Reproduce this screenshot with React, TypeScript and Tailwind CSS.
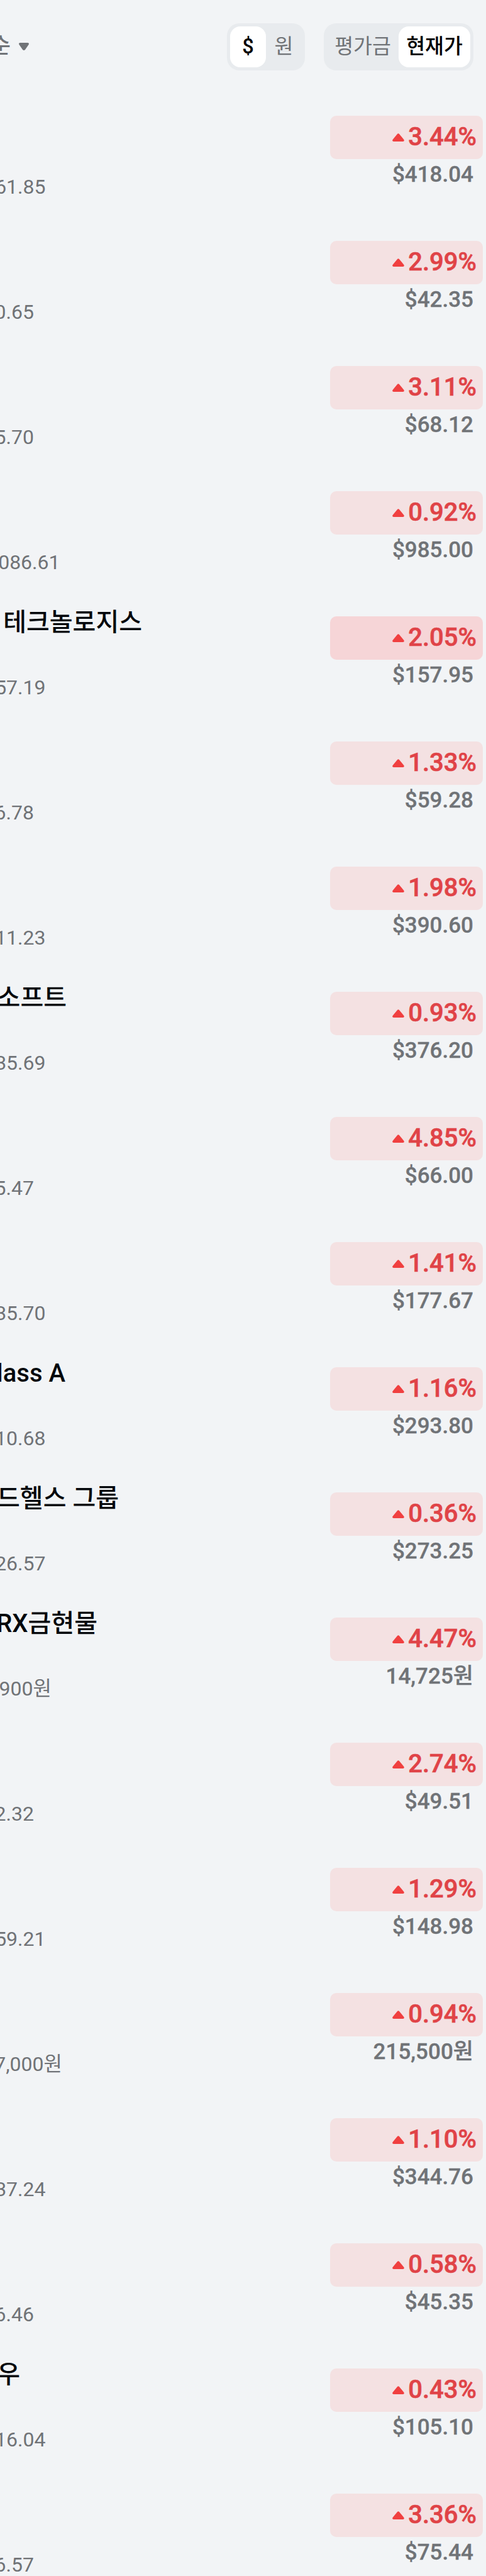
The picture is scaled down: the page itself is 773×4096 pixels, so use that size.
import React from "react";

type Holding = { name?: string; nameW?: string; sub: string; subW: string; rate: string; price: string; hot?: boolean };

const holdings: Holding[] = [
  { sub: "61.85", subW: "w-[72.5px]", rate: "3.44%", price: "$418.04" },
  { sub: "0.65", subW: "w-[54px]", rate: "2.99%", price: "$42.35" },
  { sub: "5.70", subW: "w-[54px]", rate: "3.11%", price: "$68.12" },
  { sub: "086.61", subW: "w-[95.5px]", rate: "0.92%", price: "$985.00" },
  { name: "테크놀로지스", nameW: "w-[226px]", sub: "57.19", subW: "w-[72.5px]", rate: "2.05%", price: "$157.95", hot: true },
  { sub: "6.78", subW: "w-[54px]", rate: "1.33%", price: "$59.28" },
  { sub: "11.23", subW: "w-[72.5px]", rate: "1.98%", price: "$390.60" },
  { name: "소프트", nameW: "w-[106px]", sub: "35.69", subW: "w-[72.5px]", rate: "0.93%", price: "$376.20" },
  { sub: "5.47", subW: "w-[54px]", rate: "4.85%", price: "$66.00" },
  { sub: "35.70", subW: "w-[72.5px]", rate: "1.41%", price: "$177.67" },
  { name: "lass A", nameW: "w-[104px]", sub: "10.68", subW: "w-[72.5px]", rate: "1.16%", price: "$293.80" },
  { name: "드헬스 그룹", nameW: "w-[189px]", sub: "26.57", subW: "w-[72.5px]", rate: "0.36%", price: "$273.25" },
  { name: "RX금현물", nameW: "w-[155px]", sub: "900원", subW: "w-[82px]", rate: "4.47%", price: "14,725원" },
  { sub: "2.32", subW: "w-[54px]", rate: "2.74%", price: "$49.51" },
  { sub: "59.21", subW: "w-[72.5px]", rate: "1.29%", price: "$148.98" },
  { sub: "7,000원", subW: "w-[99px]", rate: "0.94%", price: "215,500원" },
  { sub: "37.24", subW: "w-[72.5px]", rate: "1.10%", price: "$344.76" },
  { sub: "6.46", subW: "w-[54px]", rate: "0.58%", price: "$45.35" },
  { name: "우", nameW: "w-[32px]", sub: "16.04", subW: "w-[72.5px]", rate: "0.43%", price: "$105.10" },
  { sub: "6.57", subW: "w-[54px]", rate: "3.36%", price: "$75.44" },
];

function Row({ h }: { h: Holding }) {
  return (
    <div className="flex h-[199.02px] shrink-0 items-start justify-between pr-[5px]">
      <div className="flex flex-col pt-[4px] whitespace-nowrap">
        <div className={`flex h-[60px] justify-end overflow-hidden text-[40px] leading-[60px] font-medium text-[#05080c] ${h.nameW ?? "w-px"}`}>
          {h.name}
        </div>
        <div className={`mt-[51px] flex h-[44px] justify-end overflow-hidden text-[32px] leading-[44px] text-[#707377] ${h.subW}`}>
          {h.sub}
        </div>
      </div>
      <div className="flex w-[243px] flex-col pt-[24px]">
        <div className={`flex h-[69px] items-center justify-end rounded-[10px] pr-[10px] ${h.hot ? "bg-[#f6d5d7]" : "bg-[#f4e1e2]"}`}>
          <svg viewBox="0 0 19 13" className="mr-[6px] h-[13px] w-[19px] fill-[#f04040]">
            <path d="M8 1 Q9.5 -.6 11 1 L18.4 10 Q19.6 12.6 17 13 H2 Q-.6 12.6 .6 10 Z" />
          </svg>
          <span className="pb-[1px] text-[40px] leading-none font-medium text-[#e04347] [-webkit-text-stroke:0.6px_#e04347]">{h.rate}</span>
        </div>
        <div className="flex h-[50px] items-center justify-end pr-[15px] text-[35px] font-medium text-[#707377] [-webkit-text-stroke:0.3px_#707377]">{h.price}</div>
      </div>
    </div>
  );
}

export default function App() {
  return (
    <main className="flex h-[4096px] w-[773px] flex-col overflow-hidden bg-[#f2f4f6] font-['Roboto','Noto_Sans_CJK_KR',sans-serif]">
      <header className="flex h-[160px] shrink-0 items-start pt-[37px] pr-[20px]">
        <div className="flex h-[75px] w-[17px] items-center justify-end overflow-hidden pb-[1px] text-[35px] font-medium text-[#707377]">순</div>
        <svg viewBox="0 0 16 12" className="mt-[31px] ml-[13px] h-[12px] w-[16px] fill-[#707377]">
          <path d="M2 0 H14 Q17 .5 15.5 3 L10 11 Q8 13 6 11 L.5 3 Q-1 .5 2 0 Z" />
        </svg>
        <div className="ml-auto flex h-[75px] w-[124px] rounded-[20px] bg-[#e8ebee] p-[5px] text-[32.5px]">
          <div className="flex w-[57px] items-center justify-center rounded-[16px] bg-white pb-[1px] font-medium text-black">$</div>
          <div className="flex flex-1 items-center justify-center pb-[1px] text-[#707377]">원</div>
        </div>
        <div className="ml-[30px] flex h-[75px] w-[238px] rounded-[20px] bg-[#e8ebee] p-[5px] text-[32.5px]">
          <div className="flex flex-1 items-center justify-center pb-[1px] text-[#707377]">평가금</div>
          <div className="flex w-[114px] items-center justify-center rounded-[16px] bg-white pb-[1px] font-medium text-black">현재가</div>
        </div>
      </header>
      {holdings.map((h, i) => (
        <Row key={i} h={h} />
      ))}
    </main>
  );
}
